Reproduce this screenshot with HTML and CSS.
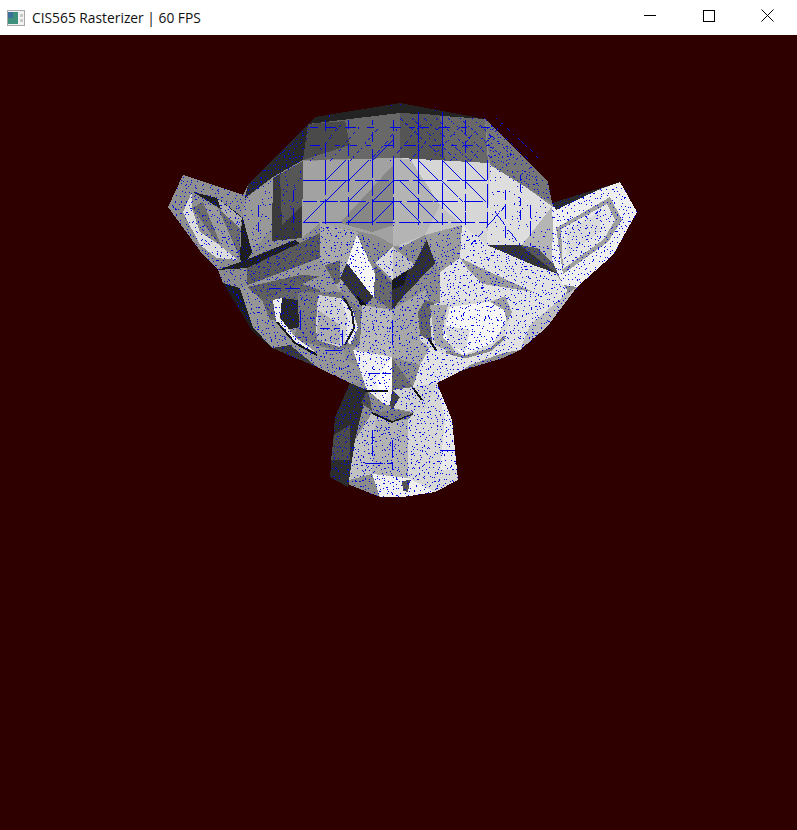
FILE: index.html
```html
<!DOCTYPE html>
<html lang="en">
<head>
<meta charset="utf-8">
<title>CIS565 Rasterizer | 60 FPS</title>
<link rel="stylesheet" href="styles.css">
</head>
<body>
<div class="window">
  <header class="titlebar">
    <svg class="app-icon" width="18" height="16" viewBox="0 0 18 16">
      <rect x="0.5" y="0.5" width="17" height="15" fill="#f2f2f2" stroke="#a8a8a8"/>
      <rect x="1" y="2" width="10" height="12" fill="#3f8f7d"/>
      <rect x="1" y="2" width="5" height="6" fill="#3b6f9c"/>
      <rect x="13" y="4" width="3" height="3" fill="#c8c8c8"/>
      <rect x="13" y="9" width="3" height="3" fill="#c8c8c8"/>
    </svg>
    <span class="title">CIS565 Rasterizer | 60 FPS</span>
    <div class="controls">
      <span class="control"><svg width="12" height="12" viewBox="0 0 12 12"><path d="M0 5.5H12" class="glyph"/></svg></span>
      <span class="control"><svg width="12" height="12" viewBox="0 0 12 12"><rect x="0.5" y="0.5" width="11" height="11" class="glyph"/></svg></span>
      <span class="control"><svg width="13" height="13" viewBox="0 0 13 13"><path d="M0.5 0.5L12.5 12.5M12.5 0.5L0.5 12.5" class="glyph soft"/></svg></span>
    </div>
  </header>
  <main class="viewport">
    <svg id="scene" class="scene" viewBox="0 35 797 795" width="797" height="795">
      <!-- silhouette -->
      <polygon id="sil" fill="#8c8c8c" points="315,117 400,103 485,119 548,182 552,203 620,182 637,212 613,255 577,287 547,327 520,350 503,358 463,370 437,383 452,420 457,470 458,480 435,492 403,497 380,497 330,477 335,417 350,383 317,367 272,348 253,327 223,283 218,270 203,255 168,207 183,175 243,195 248,185"/>

      <!-- skull top -->
      <polygon fill="#232323" points="315,117 400,103 485,119 400,113 308,124"/>
      <polygon fill="#686868" points="308,124 400,113 485,119 488,163 400,158 303,160"/>
      <polygon fill="#4a4a4a" points="303,160 308,124 345,121 350,145"/>
      <polygon fill="#555555" points="400,113 440,115 445,161 400,158"/>
      <polygon fill="#777777" points="485,119 548,182 552,203 527,188 490,165"/>
      <polygon fill="#8c8c8c" points="488,163 527,188 552,203 553,245 520,245 495,200"/>
      <polygon fill="#292929" points="315,117 308,124 303,160 273,177 245,198 248,185"/>

      <!-- left temple -->
      <polygon fill="#989898" points="245,199 273,178 272,228 252,252 242,219"/>
      <polygon fill="#3b3b3b" points="273,178 303,161 302,238 272,241 272,228"/>
      <polygon fill="#565656" points="280,174 303,161 303,205 282,225"/>

      <!-- forehead -->
      <polygon fill="#a2a2a2" points="303,161 393,158 400,158 400,248 375,235 320,223 302,238"/>
      <polygon fill="#878787" points="340,223 393,165 393,225 372,232"/>
      <polygon fill="#c4c4c4" points="393,158 490,163 490,245 462,225 425,235 400,248 393,225"/>
      <polygon fill="#d6d6d6" points="400,158 470,162 488,163 487,245 462,225 440,205"/>
      <polygon fill="#b4b4b4" points="393,158 410,159 440,205 425,235 393,247"/>
      <polygon fill="#dedede" points="490,165 527,188 553,207 553,245 520,245 487,245"/>
      <polygon fill="#b5b5b5" points="522,245 553,205 556,263 540,262"/>

      <!-- left ear -->
      <polygon fill="#8f8f8f" points="168,207 183,175 243,195 243,220 218,270 203,255"/>
      <polygon fill="#6c6c6c" points="192,208 203,202 218,208 240,228 240,258 217,242"/>
      <polygon fill="#9a9a9a" points="203,202 218,208 240,258 223,250"/>
      <polygon fill="#dcdcdc" points="192,192 183,212 200,245 217,258 238,260 218,244 200,232 192,208"/>
      <polygon fill="#202020" points="193,192 242,222 241,216 217,198"/>
      <polygon fill="#adadad" points="217,198 242,218 240,228 222,212"/>

      <!-- brow left -->
      <polygon fill="#1e1e1e" points="242,215 252,252 243,268 240,258"/>
      <polygon fill="#202020" points="218,270 243,261 295,240 300,243 247,268"/>
      <polygon fill="#5a5a5a" points="247,268 300,243 320,233 320,258 247,288"/>
      <polygon fill="#a9a9a9" points="320,223 358,232 340,292 320,292"/>
      <polygon fill="#666666" points="325,265 340,260 340,282 328,290"/>

      <!-- left cheek / eye -->
      <polygon fill="#969696" points="240,288 320,258 340,292 345,360 392,380 350,383 317,367 272,348 253,327"/>
      <polygon fill="#666666" points="262,300 300,283 320,290 300,320 270,320"/>
      <polygon fill="#5f5f5f" points="247,287 300,275 320,276 300,285 262,300"/>
      <polygon fill="#7a7a7a" points="298,292 340,292 365,315 358,345 335,350 295,340"/>
      <polygon fill="#cfcfcf" points="318,295 340,298 352,312 352,338 340,347 317,340 316,325"/>
      <polygon fill="#adadad" points="318,310 340,325 340,345 317,340"/>
      <polygon fill="#e8e8e8" points="340,298 352,308 358,328 350,345 345,340 348,318"/>
      <polygon fill="#282828" points="282,298 298,300 299,327 287,330 280,317"/>
      <polygon fill="#ececec" points="273,300 282,298 280,318 296,338 316,352 296,344 276,322"/>
      <polyline fill="none" stroke="#141414" stroke-width="2" points="277,322 295,343 317,355"/>
      <polyline fill="none" stroke="#1c1c1c" stroke-width="2" points="344,298 352,312 354,328 345,345"/>
      <polygon fill="#1e1e1e" points="223,283 240,288 253,327 272,348 253,332"/>
      <polygon fill="#3a3a3a" points="272,348 290,345 317,367"/>

      <!-- nose bridge -->
      <polygon fill="#f6f6f6" points="357,235 392,310 373,297 347,263"/>
      <polygon fill="#343434" points="347,263 373,297 363,307 340,278"/>
      <polygon fill="#101010" points="357,296 366,304 366,310 360,305"/>
      <polygon fill="#d8d8d8" points="393,247 393,280 375,263"/>
      <polygon fill="#bdbdbd" points="393,247 415,265 393,280"/>
      <polygon fill="#6b6b6b" points="392,282 392,310 374,298 375,266"/>
      <polygon fill="#323232" points="428,237 435,263 403,297 392,310 392,280 413,267"/>
      <polygon fill="#1a1a1a" points="392,280 408,270 404,285 392,290"/>
      <polygon fill="#8a8a8a" points="360,307 392,312 392,332 363,322"/>

      <!-- centre -->
      <polygon fill="#b9b9b9" points="362,305 392,310 392,357 353,350 360,345"/>
      <polygon fill="#a7a7a7" points="392,310 425,290 440,330 420,365 392,357"/>

      <!-- right brow and face -->
      <polygon fill="#9c9c9c" points="425,235 462,225 460,258 440,272 435,262"/>
      <polygon fill="#e2e2e2" points="462,225 487,245 555,272 567,290 565,300 520,350 463,370 437,383 413,387 420,365 440,330 440,272 460,258"/>
      <polygon fill="#343434" points="487,245 520,245 567,277 533,265"/>
      <polygon fill="#9d9d9d" points="460,258 533,292 483,284 470,272"/>
      <polygon fill="#585858" points="520,245 537,248 567,277 555,272"/>
      <polygon fill="#bdbdbd" points="547,327 577,287 565,295 530,325 520,350"/>

      <!-- right ear -->
      <polygon fill="#efefef" points="552,207 620,182 637,212 613,255 577,287 563,285 552,260 553,225"/>
      <polygon fill="#2b2b2b" points="552,203 620,182 602,188 556,210"/>
      <polygon fill="#a0a0a0" points="556,228 610,197 622,220 608,242 563,274"/>
      <polygon fill="#e6e6e6" points="561,229 607,204 615,220 604,239 563,269"/>
      <polygon fill="#dadada" points="567,230 600,212 600,232 567,255"/>

      <!-- right eye -->
      <polygon fill="#d6d6d6" points="420,310 445,300 500,300 510,320 500,345 463,358 433,350 420,340"/>
      <polygon fill="#666666" points="418,312 425,300 434,303 430,320 432,342 420,335"/>
      <polygon fill="#a6a6a6" points="430,305 448,305 442,330 457,355 435,345"/>
      <polygon fill="#f6f6f6" points="450,307 503,300 510,313 493,343 463,355 443,338"/>
      <polygon fill="#dadada" points="443,325 470,330 465,352 450,345"/>
      <polyline fill="none" stroke="#111111" stroke-width="2" points="428,338 436,350"/>
      <polyline fill="none" stroke="#8a8a8a" stroke-width="3" points="446,352 465,357 490,350 505,337"/>
      <polygon fill="#a0a0a0" points="505,296 512,312 507,322 504,310 490,302"/>
      <polygon fill="#909090" points="463,370 503,358 520,350 503,353 470,365"/>

      <!-- neck and chin -->
      <polygon fill="#2d2d2d" points="350,383 367,390 355,440 348,487 330,477 335,417"/>
      <polygon fill="#4c4c4c" points="334,435 350,425 350,460 331,460"/>
      <polygon fill="#c2c2c2" points="355,440 372,413 392,422 392,476 372,474 349,480"/>
      <polygon fill="#b3b3b3" points="375,420 410,420 408,478 372,474"/>
      <polygon fill="#d7d7d7" points="408,420 437,383 452,420 457,470 458,480 435,492 408,478"/>
      <polygon fill="#e9e9e9" points="437,383 452,420 457,470 440,470 445,420"/>
      <polygon fill="#efefef" points="372,474 408,478 435,492 403,497 380,497"/>
      <polygon fill="#555555" points="402,481 410,480 408,492 403,491"/>

      <!-- nose -->
      <polygon fill="#eeeeee" points="353,350 392,357 392,407 383,403 367,390"/>
      <polygon fill="#ffffff" points="392,357 392,385 383,403 376,380"/>
      <polygon fill="#6c6c6c" points="392,358 413,387 392,390"/>
      <polygon fill="#d0d0d0" points="392,390 413,387 437,383 425,410 413,412 392,408"/>
      <polygon fill="#444444" points="392,390 400,397 392,410 390,405"/>
      <polygon fill="#505050" points="367,390 370,398 372,411 361,403"/>
      <polygon fill="#7b7b7b" points="372,413 392,410 413,413 392,422"/>
      <polyline fill="none" stroke="#161616" stroke-width="2" points="372,413 392,422"/>
      <polyline fill="none" stroke="#222222" stroke-width="1.5" points="392,422 413,414"/>
      <polyline fill="none" stroke="#111111" stroke-width="2" points="413,388 422,400"/>
      <polyline fill="none" stroke="#111111" stroke-width="1.5" points="365,391 388,391"/>

      <path id="speckle" class="pixels"/>
    </svg>
  </main>
</div>
<script src="scene.js"></script>
</body>
</html>
```

FILE: styles.css
```css
* { box-sizing: border-box; }
html, body { margin: 0; height: 100%; background: #2e0000; overflow: hidden; }
.window { display: flex; flex-direction: column; height: 830px; width: 797px; }
.titlebar {
  display: flex;
  align-items: center;
  height: 35px;
  flex: none;
  background: #ffffff;
  padding-left: 7px;
  font-family: "Open Sans", "Noto Sans", sans-serif;
  font-size: 13.8px;
  color: #111111;
}
.app-icon { flex: none; margin-right: 7px; }
.title { white-space: nowrap; }
.controls { display: flex; margin-left: auto; height: 100%; }
.control { display: flex; align-items: center; justify-content: center; width: 59px; height: 100%; padding-bottom: 4px; }
.control svg { display: block; }
.glyph { fill: none; stroke: #000000; stroke-width: 1; shape-rendering: crispEdges; }
.glyph.soft { shape-rendering: auto; }
.viewport { flex: 1; min-height: 0; background: #2e0000; }
.scene { display: block; }
.scene polygon, .scene polyline, .scene path { shape-rendering: crispEdges; }
.pixels { fill: #0000e6; }
```

FILE: scene.js
```js
(function () {
  var seed = 565;
  function rnd() { seed = (seed * 1664525 + 1013904223) >>> 0; return seed / 4294967296; }
  var raw = document.getElementById('sil').getAttribute('points').trim().split(/\s+/);
  var sil = raw.map(function (p) { return p.split(',').map(Number); });
  function inside(poly, x, y) {
    var c = false;
    for (var i = 0, j = poly.length - 1; i < poly.length; j = i++) {
      var a = poly[i], b = poly[j];
      if ((a[1] > y) !== (b[1] > y) && x < (b[0] - a[0]) * (y - a[1]) / (b[1] - a[1]) + a[0]) c = !c;
    }
    return c;
  }
  var forehead = [[303,160],[490,162],[490,245],[462,225],[430,236],[393,247],[360,234],[320,223],[303,238]];
  var band = [[303,160],[310,118],[400,104],[485,119],[490,162]];
  var leftWedge = [[315,117],[303,160],[245,198],[248,185]];
  var rightWedge = [[485,119],[548,182],[552,203],[490,165]];
  var d = '';
  function px(x, y, w, h) { d += 'M' + x + ' ' + y + 'h' + w + 'v' + h + 'h-' + w + 'z'; }

  // seeded scatter, so the same dots are drawn on every load
  var cell = 5;
  for (var cy = 103; cy < 498; cy += cell) {
    for (var cx = 168; cx < 638; cx += cell) {
      var n = rnd() < 0.6 ? 2 : 1;
      for (var m = 0; m < n; m++) {
        var x = cx + Math.floor(rnd() * cell), y = cy + Math.floor(rnd() * cell);
        if (!inside(sil, x, y)) continue;
        var keep = 1;
        if (inside(forehead, x, y) || inside(band, x, y)) keep = 0;
        else if (x < 303 && y < 240 && x > 245 && !inside(leftWedge, x, y)) keep = 0.35;
        else if (x > 490 && y < 245 && x < 552 && !inside(rightWedge, x, y)) keep = 0.35;
        if (rnd() < keep) {
          var r = rnd();
          if (r < 0.05) px(x, y, 2, 1);
          else if (r < 0.1) px(x, y, 1, 2);
          else px(x, y, 1, 1);
        }
      }
    }
  }

  // wire segments are written as runs of whole pixels, with gaps
  function wire(x0, y0, x1, y1, on, off) {
    var len = Math.max(Math.abs(x1 - x0), Math.abs(y1 - y0)), t = 0;
    var hor = y0 === y1, ver = x0 === x1;
    while (t < len) {
      var run = Math.max(1, Math.round(on * (0.5 + rnd()))), e = Math.min(len, t + run);
      var sx = Math.round(x0 + (x1 - x0) * t / len), sy = Math.round(y0 + (y1 - y0) * t / len);
      if (hor) px(sx, sy, Math.max(1, Math.round(e - t)), 1);
      else if (ver) px(sx, sy, 1, Math.max(1, Math.round(e - t)));
      else for (var i = t; i < e; i++) {
        px(Math.round(x0 + (x1 - x0) * i / len), Math.round(y0 + (y1 - y0) * i / len), 1, 1);
      }
      t = e + off * (0.3 + rnd());
    }
  }
  [180, 201, 222].forEach(function (y) { wire(303, y, 487, y, 22, 5); });
  [325, 348, 372, 393, 418, 442, 465, 487].forEach(function (x) { wire(x, 160, x, 225, 30, 4); });
  [418, 442].forEach(function (x) { wire(x, 112, x, 160, 40, 2); });
  [325, 348, 372, 393, 465].forEach(function (x) { wire(x, 120, x, 160, 10, 12); });
  [127, 145].forEach(function (y) { wire(310, y, 490, y, 8, 12); });
  [[303,222],[325,201],[348,222],[325,180],[348,201],[372,222],[348,180],[372,201],[372,160]].forEach(function (q) {
    wire(q[0], q[1], q[0] + 21, q[1] - 21, 30, 1);
  });
  [[400,160],[418,160],[442,160],[465,160],[400,181],[418,181],[442,181],[465,181],[418,202],[442,202],[400,202]].forEach(function (q) {
    wire(q[0], q[1], q[0] + 21, q[1] + 21, 30, 1);
  });
  for (var k = 0; k < 9; k++) {
    wire(310 + k * 20, 160, 340 + k * 20, 125, 2, 3);
    wire(400 + k * 12, 118, 445 + k * 12, 160, 2, 3);
  }
  [[258,205,258,232],[293,190,293,230],[520,175,520,220],[505,190,505,240],[530,205,530,245],[505,205,470,245],[495,212,520,245]].forEach(function (s) {
    wire(s[0], s[1], s[2], s[3], 10, 6);
  });
  [[325,350,345,350],[320,328,340,328],[392,320,392,345],[368,373,392,373],[372,430,372,460],[392,440,392,470],[365,463,392,463],[270,288,300,288],[342,330,342,350],[300,310,300,330],[440,450,455,450]].forEach(function (s) {
    wire(s[0], s[1], s[2], s[3], 14, 3);
  });
  document.getElementById('speckle').setAttribute('d', d);
})();
```
